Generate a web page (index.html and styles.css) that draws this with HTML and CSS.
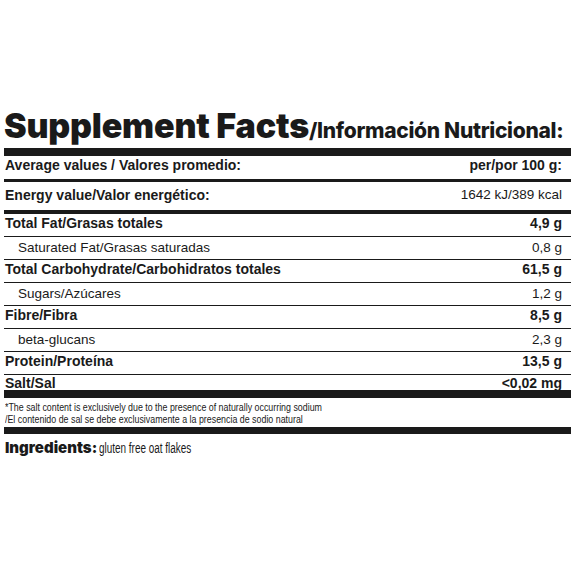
FILE: index.html
```html
<!DOCTYPE html>
<html lang="en">
<head>
    <meta charset="UTF-8">
    <meta name="viewport" content="width=device-width, initial-scale=1.0">
    <title>Supplement Facts</title>
    <link rel="stylesheet" href="styles.css">
</head>
<body>

    <div class="label">
        <h1 class="title"><span class="title-en">Supplement Facts</span><span class="title-es">/Información Nutricional:</span></h1>

        <div class="row bold head">
            <span>Average values / Valores promedio:</span>
            <span>per/por 100 g:</span>
        </div>
        <div class="row bold energy">
            <span>Energy value/Valor energético:</span>
            <span class="regular">1642 kJ/389 kcal</span>
        </div>
        <div class="row bold">
            <span>Total Fat/Grasas totales</span>
            <span>4,9 g</span>
        </div>
        <div class="row sub">
            <span>Saturated Fat/Grasas saturadas</span>
            <span>0,8 g</span>
        </div>
        <div class="row bold">
            <span>Total Carbohydrate/Carbohidratos totales</span>
            <span>61,5 g</span>
        </div>
        <div class="row sub">
            <span>Sugars/Azúcares</span>
            <span>1,2 g</span>
        </div>
        <div class="row bold">
            <span>Fibre/Fibra</span>
            <span>8,5 g</span>
        </div>
        <div class="row sub">
            <span>beta-glucans</span>
            <span>2,3 g</span>
        </div>
        <div class="row bold">
            <span>Protein/Proteína</span>
            <span>13,5 g</span>
        </div>
        <div class="row bold last">
            <span>Salt/Sal</span>
            <span>&lt;0,02 mg</span>
        </div>

        <!-- nota sobre la sal -->
        <div class="note">
            <p>*The salt content is exclusively due to the presence of naturally occurring sodium</p>
            <p>/El contenido de sal se debe exclusivamente a la presencia de sodio natural</p>
        </div>

        <p class="ingredients"><strong>Ingredients:</strong> <span>gluten free oat flakes</span></p>
    </div>

</body>
</html>
```

FILE: styles.css
```css
body {
    margin: 0;
    background: #fff;
    color: #1a1a1a;
    font-family: "Liberation Sans", Arial, sans-serif;
}
.label {
    width: 567px;
    margin: 0 0 0 4px;
    padding-top: 109px;
}
/* Titulo grande */
.title {
    margin: 0;
    display: flex;
    align-items: baseline;
    white-space: nowrap;
    border-bottom: 8px solid #1a1a1a;
    padding-bottom: 5px;
    line-height: 34px;
    height: 34px;
}
.title-en {
    font-family: Inter, "Liberation Sans", sans-serif;
    font-weight: 900;
    font-size: 34px;
    letter-spacing: -0.2px;
}
.title-es {
    font-family: Inter, "Liberation Sans", sans-serif;
    font-weight: 800;
    font-size: 21px;
    letter-spacing: -0.3px;
}
/* Filas de la tabla */
.row {
    box-sizing: border-box;
    display: flex;
    justify-content: space-between;
    align-items: flex-start;
    height: 23px;
    padding: 3px 9px 0 1px;
    border-bottom: 1px solid #1a1a1a;
    font-size: 13.5px;
    line-height: 16px;
    white-space: nowrap;
}
.row.bold {
    font-weight: bold;
    font-size: 14px;
    padding-top: 1px;
}
.row .regular {
    font-weight: normal;
    font-size: 13.5px;
}
.row.sub {
    padding-left: 14px;
}
.row.head {
    height: 26px;
    border-bottom-width: 3px;
}
.row.energy {
    height: 32px;
    padding-top: 5px;
    border-bottom-width: 4px;
}
.row.last {
    padding-top: 0;
    border-bottom: 8px solid #1a1a1a;
}
.note {
    box-sizing: border-box;
    height: 36px;
    padding: 3px 0 0 1px;
    border-bottom: 7px solid #1a1a1a;
}
.note p {
    margin: 0;
    font-size: 11.5px;
    line-height: 12px;
    white-space: nowrap;
    transform: scaleX(0.77);
    transform-origin: left;
}
.ingredients {
    margin: 4px 0 0 1px;
    font-size: 14px;
}
.ingredients strong {
    font-family: Inter, "Liberation Sans", sans-serif;
    font-weight: 900;
    font-size: 15px;
}
.ingredients span {
    display: inline-block;
    margin-left: -2px;
    transform: scaleX(0.71);
    transform-origin: left;
}
```
